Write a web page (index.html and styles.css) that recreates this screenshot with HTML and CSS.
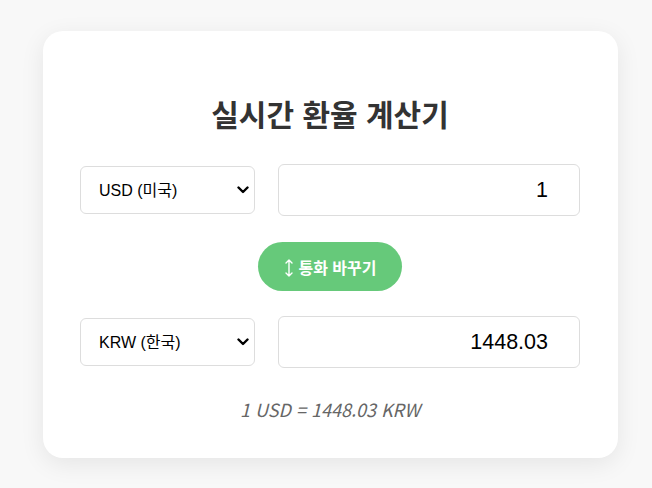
FILE: index.html
```html
<!DOCTYPE html>
<html lang="ko">
<head>
<meta charset="utf-8">
<title>실시간 환율 계산기</title>
<link rel="stylesheet" href="styles.css">
</head>
<body>
<div class="card">
  <h1 class="title">실시간 환율 계산기</h1>
  <div class="row first">
    <select class="currency">
      <option>USD (미국)</option>
      <option>KRW (한국)</option>
    </select>
    <input class="amount" type="text" value="1">
  </div>
  <div class="swap-wrap">
    <button class="swap"><svg class="arrow" width="8" height="18" viewBox="0 0 8 18"><path d="M4 1 V17 M1 4 L4 1 L7 4 M1 14 L4 17 L7 14" fill="none" stroke="#fff" stroke-width="1.4" stroke-linecap="round" stroke-linejoin="round"/></svg><span>통화 바꾸기</span></button>
  </div>
  <div class="row">
    <select class="currency">
      <option>KRW (한국)</option>
      <option>USD (미국)</option>
    </select>
    <input class="amount" type="text" value="1448.03">
  </div>
  <p class="rate">1 USD = 1448.03 KRW</p>
</div>
</body>
</html>
```
FILE: styles.css
```css
html, body {
  margin: 0;
  padding: 0;
}
body {
  background: #f8f8f8;
  font-family: "Noto Sans CJK KR", "Noto Sans", sans-serif;
  height: 488px;
  overflow: hidden;
}
.card {
  box-sizing: border-box;
  width: 575px;
  height: 427px;
  margin: 31px 0 0 43px;
  background: #fff;
  border-radius: 20px;
  box-shadow: 0 6px 24px rgba(0, 0, 0, 0.08);
  padding: 0 38px 0 37px;
  display: flex;
  flex-direction: column;
}
.title {
  margin: 60px 0 0 0;
  text-align: center;
  font-size: 30px;
  line-height: 44px;
  font-weight: 700;
  color: #333;
}
.row {
  display: flex;
  align-items: center;
  gap: 23px;
}
.row.first {
  margin-top: 29px;
}
.currency {
  appearance: none;
  -webkit-appearance: none;
  box-sizing: border-box;
  width: 175px;
  height: 48px;
  border: 1px solid #ddd;
  border-radius: 6px;
  background: #fff url("data:image/svg+xml,%3Csvg xmlns='http://www.w3.org/2000/svg' width='12' height='8' viewBox='0 0 12 8'%3E%3Cpath d='M1.5 1.5 L6 6 L10.5 1.5' fill='none' stroke='%23000' stroke-width='2.4' stroke-linecap='round' stroke-linejoin='round'/%3E%3C/svg%3E") no-repeat right 5px center;
  font-family: "Liberation Sans", "Noto Sans CJK KR", sans-serif;
  font-size: 16px;
  color: #000;
  padding: 0 20px 0 18px;
}
.amount {
  box-sizing: border-box;
  width: 302px;
  height: 52px;
  border: 1px solid #ddd;
  border-radius: 6px;
  font-family: "Liberation Sans", sans-serif;
  font-size: 21.5px;
  color: #000;
  text-align: right;
  padding: 0 31px 0 15px;
  outline: none;
}
.swap-wrap {
  display: flex;
  justify-content: center;
  margin: 26px 0 25px;
}
.swap {
  box-sizing: border-box;
  width: 144px;
  height: 49px;
  border: none;
  border-radius: 25px;
  background: #66c97a;
  color: #fff;
  font-family: "Noto Sans CJK KR", sans-serif;
  font-size: 16px;
  font-weight: 700;
  padding: 0 0 0 2px;
  display: flex;
  align-items: center;
  justify-content: center;
  gap: 5px;
}
.arrow {
  display: block;
  margin-top: 2px;
}
.rate {
  margin: 28px 0 0 0;
  text-align: center;
  font-style: italic;
  font-size: 18px;
  color: #666;
}
```
